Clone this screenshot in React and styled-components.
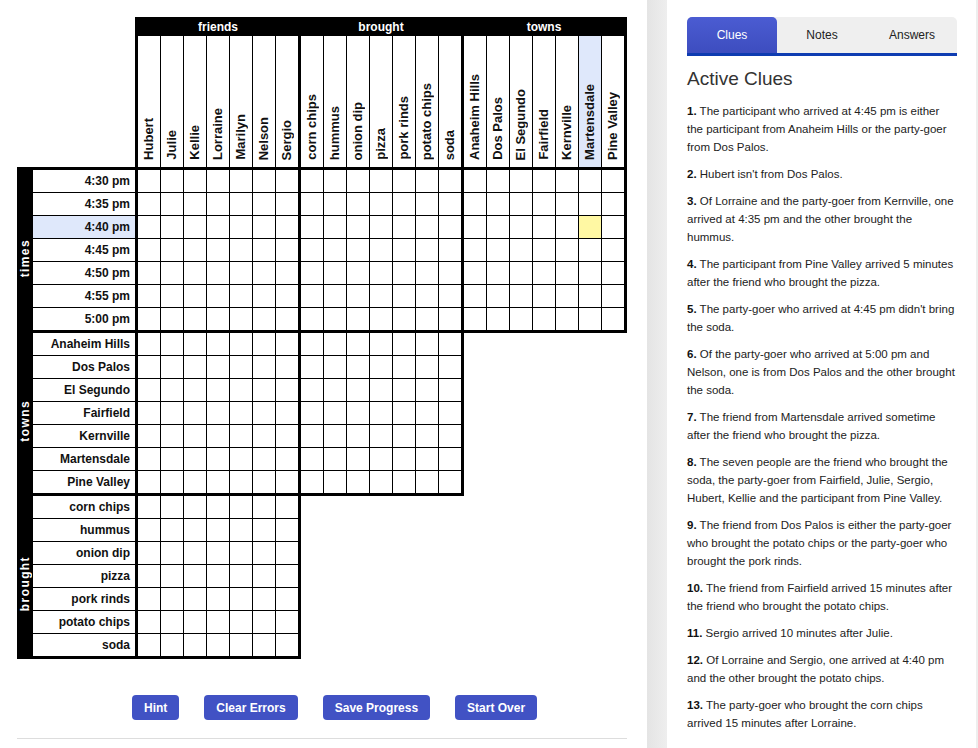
import styled, { createGlobalStyle } from "styled-components";

const friends = ["Hubert", "Julie", "Kellie", "Lorraine", "Marilyn", "Nelson", "Sergio"];
const brought = ["corn chips", "hummus", "onion dip", "pizza", "pork rinds", "potato chips", "soda"];
const towns = ["Anaheim Hills", "Dos Palos", "El Segundo", "Fairfield", "Kernville", "Martensdale", "Pine Valley"];
const times = ["4:30 pm", "4:35 pm", "4:40 pm", "4:45 pm", "4:50 pm", "4:55 pm", "5:00 pm"];

const COLUMNS = [
  { key: "friends", items: friends },
  { key: "brought", items: brought },
  { key: "towns", items: towns },
];

const ROWS = [
  { key: "times", items: times, blocks: ["friends", "brought", "towns"] },
  { key: "towns", items: towns, blocks: ["friends", "brought"] },
  { key: "brought", items: brought, blocks: ["friends"] },
];

// what the player is looking at right now
const focus = { rowGroup: "times", row: 2, colGroup: "towns", col: 5 };

const clues = [
  "The participant who arrived at 4:45 pm is either the participant from Anaheim Hills or the party-goer from Dos Palos.",
  "Hubert isn't from Dos Palos.",
  "Of Lorraine and the party-goer from Kernville, one arrived at 4:35 pm and the other brought the hummus.",
  "The participant from Pine Valley arrived 5 minutes after the friend who brought the pizza.",
  "The party-goer who arrived at 4:45 pm didn't bring the soda.",
  "Of the party-goer who arrived at 5:00 pm and Nelson, one is from Dos Palos and the other brought the soda.",
  "The friend from Martensdale arrived sometime after the friend who brought the pizza.",
  "The seven people are the friend who brought the soda, the party-goer from Fairfield, Julie, Sergio, Hubert, Kellie and the participant from Pine Valley.",
  "The friend from Dos Palos is either the party-goer who brought the potato chips or the party-goer who brought the pork rinds.",
  "The friend from Fairfield arrived 15 minutes after the friend who brought the potato chips.",
  "Sergio arrived 10 minutes after Julie.",
  "Of Lorraine and Sergio, one arrived at 4:40 pm and the other brought the potato chips.",
  "The party-goer who brought the corn chips arrived 15 minutes after Lorraine.",
];

export default function App() {
  return (
    <>
      <GlobalStyle />
      <Page>
        <Main>
          <Puzzle>
            <HeaderRow>
              <Corner />
              {COLUMNS.map((group) => (
                <ColumnGroup key={group.key}>
                  <GroupTitle>{group.key}</GroupTitle>
                  <ColLabels>
                    {group.items.map((name, i) => (
                      <ColLabel
                        key={name}
                        $active={group.key === focus.colGroup && i === focus.col}
                      >
                        <span>{name}</span>
                      </ColLabel>
                    ))}
                  </ColLabels>
                </ColumnGroup>
              ))}
            </HeaderRow>

            {ROWS.map((section) => (
              <Section key={section.key}>
                <SideTitle>
                  <span>{section.key}</span>
                </SideTitle>
                <RowLabels>
                  {section.items.map((name, i) => (
                    <RowLabel
                      key={name}
                      $active={section.key === focus.rowGroup && i === focus.row}
                    >
                      {name}
                    </RowLabel>
                  ))}
                </RowLabels>
                {section.blocks.map((colKey) => (
                  <Block key={colKey}>
                    {Array.from({ length: 49 }).map((_, n) => {
                      const r = Math.floor(n / 7);
                      const c = n % 7;
                      const hot =
                        section.key === focus.rowGroup &&
                        colKey === focus.colGroup &&
                        r === focus.row &&
                        c === focus.col;
                      return <Cell key={n} $hot={hot} />;
                    })}
                  </Block>
                ))}
              </Section>
            ))}
          </Puzzle>

          <ButtonRow>
            <ActionButton>Hint</ActionButton>
            <ActionButton>Clear Errors</ActionButton>
            <ActionButton>Save Progress</ActionButton>
            <ActionButton>Start Over</ActionButton>
          </ButtonRow>
          <Divider />
        </Main>

        <Sidebar>
          <SidebarInner>
            <TabBar>
              <Tab $active>Clues</Tab>
              <Tab>Notes</Tab>
              <Tab>Answers</Tab>
            </TabBar>
            <Heading>Active Clues</Heading>
            {clues.map((text, i) => (
              <Clue key={i}>
                <b>{i + 1}.</b> {text}
              </Clue>
            ))}
          </SidebarInner>
        </Sidebar>
      </Page>
    </>
  );
}

const GlobalStyle = createGlobalStyle`
  html, body {
    margin: 0;
    padding: 0;
    background: #fff;
    font-family: "Liberation Sans", Arial, sans-serif;
  }
  * { box-sizing: border-box; }
`;

const Page = styled.div`
  display: flex;
  height: 100vh;
  overflow: hidden;
`;

const Main = styled.div`
  width: 647px;
  flex-shrink: 0;
  padding: 17px 0 0 17px;
`;

const Puzzle = styled.div`
  display: flex;
  flex-direction: column;
  align-items: flex-start;
  color: #111;
`;

const HeaderRow = styled.div`
  display: flex;
`;

const Corner = styled.div`
  width: 118px;
`;

const ColumnGroup = styled.div`
  display: flex;
  flex-direction: column;
  border-left: 3px solid #000;
  background: #000;

  &:last-child {
    border-right: 3px solid #000;
  }
`;

const GroupTitle = styled.div`
  height: 19px;
  padding-top: 1px;
  line-height: 19px;
  text-align: center;
  color: #fff;
  font-weight: bold;
  font-size: 12px;
`;

const ColLabels = styled.div`
  display: flex;
  gap: 1px;
  height: 131px;
`;

const ColLabel = styled.div`
  width: 22px;
  display: flex;
  align-items: flex-end;
  justify-content: center;
  padding-bottom: 7px;
  background: ${(p) => (p.$active ? "#dfe8fb" : "#fff")};

  span {
    writing-mode: vertical-rl;
    transform: rotate(180deg);
    font-weight: bold;
    font-size: 13px;
    line-height: 22px;
    white-space: nowrap;
  }
`;

const Section = styled.div`
  display: flex;
  border-bottom: 3px solid #000;
  border-right: 3px solid #000;

  &:nth-child(2) {
    border-top: 3px solid #000;
  }
`;

const SideTitle = styled.div`
  width: 16px;
  background: #000;
  display: flex;
  align-items: center;
  justify-content: center;
  padding-top: 16px;

  span {
    writing-mode: vertical-rl;
    transform: rotate(180deg);
    color: #fff;
    font-weight: bold;
    font-size: 12px;
    letter-spacing: 1.4px;
    line-height: 16px;
  }
`;

const RowLabels = styled.div`
  width: 102px;
  display: flex;
  flex-direction: column;
  gap: 1px;
  background: #000;
`;

const RowLabel = styled.div`
  height: 22px;
  line-height: 22px;
  padding-right: 5px;
  text-align: right;
  font-weight: bold;
  font-size: 12px;
  white-space: nowrap;
  background: ${(p) => (p.$active ? "#dfe8fb" : "#fff")};
`;

const Block = styled.div`
  display: grid;
  grid-template-columns: repeat(7, 22px);
  grid-auto-rows: 22px;
  gap: 1px;
  background: #000;
  border-left: 3px solid #000;
`;

const Cell = styled.div`
  background: ${(p) => (p.$hot ? "#fff8a3" : "#fff")};
`;

const ButtonRow = styled.div`
  display: flex;
  gap: 25px;
  margin-top: 36px;
  padding-left: 115px;
`;

const ActionButton = styled.button`
  height: 25px;
  padding: 0 12px;
  border: none;
  border-radius: 4px;
  background: #4152c4;
  color: #fff;
  font-family: "Liberation Sans", Arial, sans-serif;
  font-weight: bold;
  font-size: 12px;
  cursor: pointer;
`;

const Divider = styled.div`
  width: 610px;
  margin-top: 18px;
  border-top: 1px solid #ddd;
`;

const Sidebar = styled.div`
  flex: 1;
  padding: 0 2px 0 20px;
  background: linear-gradient(to right, #e4e4e4, #eeeeee 20px, #eeeeee);
`;

const SidebarInner = styled.div`
  height: 100%;
  background: #fff;
  padding: 17px 19px 0 20px;
  overflow: hidden;
`;

const TabBar = styled.div`
  display: flex;
  background: #efefef;
  border-radius: 5px 5px 0 0;
  border-bottom: 3px solid #0e3cb1;
`;

const Tab = styled.div`
  width: 90px;
  height: 36px;
  display: flex;
  align-items: center;
  justify-content: center;
  font-size: 12px;
  color: ${(p) => (p.$active ? "#fff" : "#222")};
  background: ${(p) => (p.$active ? "linear-gradient(#4b5cd2, #3d4dbf)" : "transparent")};
  border-radius: 5px 5px 0 0;
`;

const Heading = styled.h2`
  margin: 12px 0 12px;
  font-size: 19px;
  font-weight: normal;
  color: #333;
`;

const Clue = styled.p`
  margin: 0 0 9px;
  font-size: 11.5px;
  line-height: 18px;
  color: #222;

  b {
    color: #111;
  }
`;
